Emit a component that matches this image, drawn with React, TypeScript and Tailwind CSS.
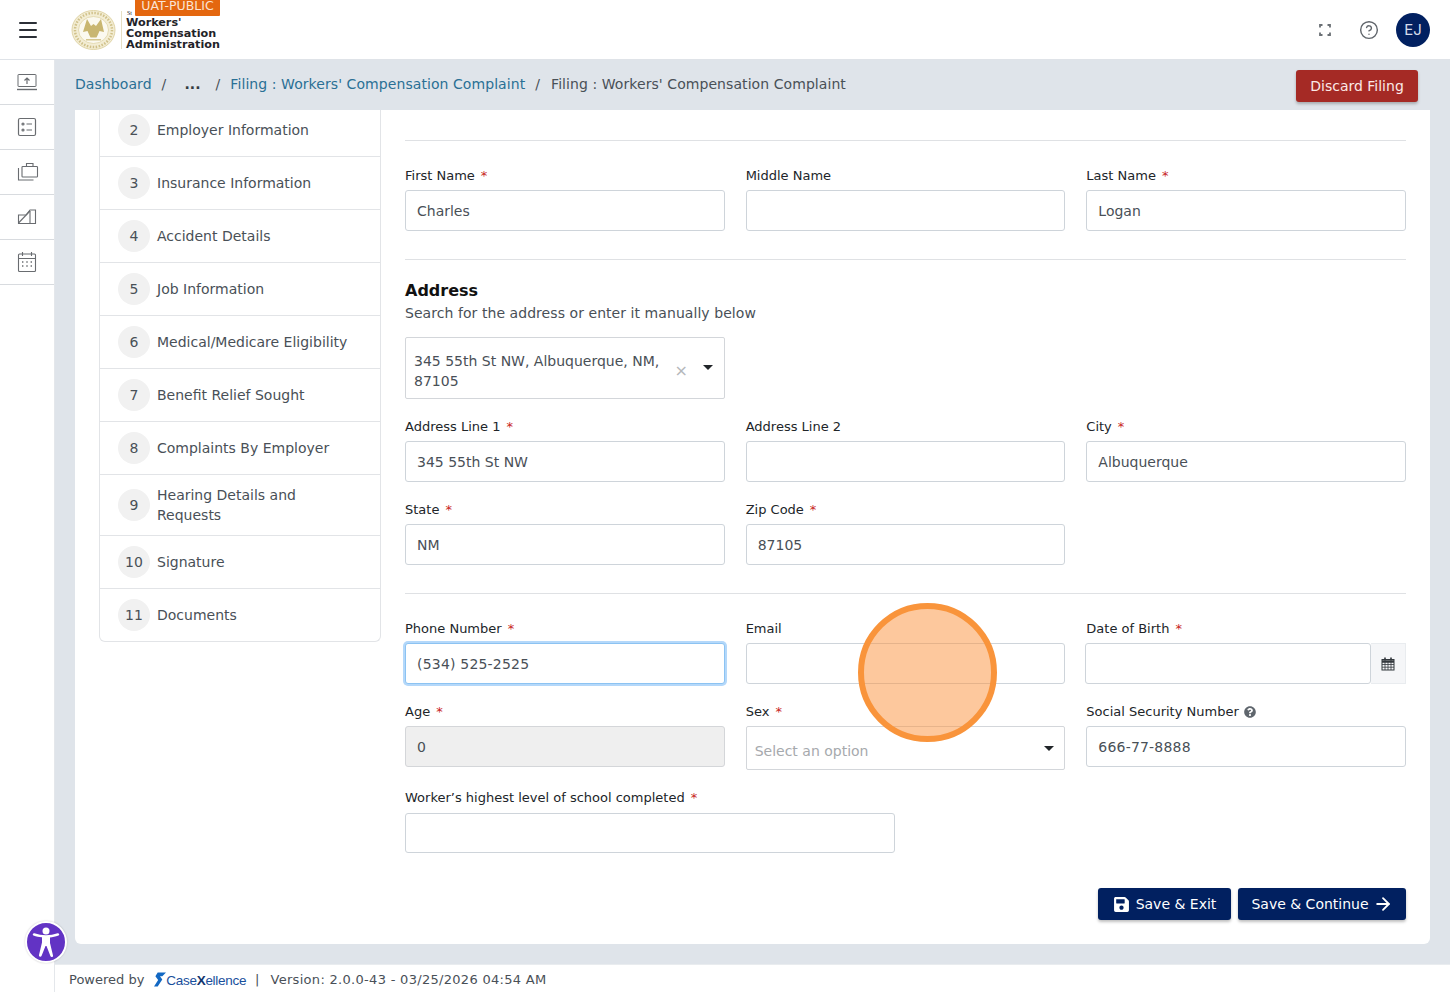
import React from "react";
import { FaSave, FaQuestionCircle } from "react-icons/fa";
import { ArrowRight, CircleHelp, Menu } from "lucide-react";

const steps: [string, string][] = [
  ["2", "Employer Information"],
  ["3", "Insurance Information"],
  ["4", "Accident Details"],
  ["5", "Job Information"],
  ["6", "Medical/Medicare Eligibility"],
  ["7", "Benefit Relief Sought"],
  ["8", "Complaints By Employer"],
  ["9", "Hearing Details and Requests"],
  ["10", "Signature"],
  ["11", "Documents"],
];

function Label({ text, req }: { text: string; req?: boolean }) {
  return (
    <div className="h-[20px] mb-[4px] leading-[20px] text-[13px] text-[#212529] whitespace-nowrap">
      {text}
      {req && <span className="text-[#c81e1e] ml-[6px]">*</span>}
    </div>
  );
}

function Input({ value, extra }: { value?: string; extra?: string }) {
  return (
    <div className={`h-[41px] rounded-[3px] border px-[11px] pt-[1px] flex items-center text-[14px] text-[#495057] ${extra ?? "bg-white border-[#ced4da]"}`}>
      {value}
    </div>
  );
}

function Field({ label, req, value, extra }: { label: string; req?: boolean; value?: string; extra?: string }) {
  return (
    <div>
      <Label text={label} req={req} />
      <Input value={value} extra={extra} />
    </div>
  );
}

function Caret() {
  return (
    <svg width="10" height="5" viewBox="0 0 10 5" className="shrink-0">
      <path d="M0 0h10L5 5z" fill="#212529" />
    </svg>
  );
}

function Divider() {
  return <div className="h-px bg-[#dfe1e4]" />;
}

const sideIcons = [
  <svg key="a" width="22" height="18" viewBox="0 0 22 18" fill="none" stroke="#696c70" strokeWidth="1">
    <rect x="2" y="1.500" width="18" height="12" rx="0.500" />
    <path d="M11 11V5M8.500 7.500 11 5l2.500 2.500" strokeWidth="1.200" />
    <path d="M1 16.500h20" strokeWidth="1.400" />
  </svg>,
  <svg key="b" width="20" height="20" viewBox="0 0 20 20" fill="none" stroke="#696c70" strokeWidth="1.200">
    <rect x="1.500" y="1.500" width="17" height="17" rx="1.500" />
    <circle cx="6" cy="7" r="1" />
    <circle cx="6" cy="13" r="1" />
    <path d="M9.500 7H15M9.500 13H15" />
  </svg>,
  <svg key="c" width="22" height="20" viewBox="0 0 22 20" fill="none" stroke="#696c70" strokeWidth="1.100" className="ml-[2px]">
    <rect x="5" y="4.500" width="15.500" height="10.500" rx="0.800" />
    <path d="M9.500 4.500V1.500h6.500v3" />
    <path d="M1.500 6v12h15" />
  </svg>,
  <svg key="d" width="20" height="16" viewBox="0 0 20 16" fill="none" stroke="#696c70" strokeWidth="1.100">
    <path d="M1.500 6h7.500l4-5h5.500v13.500h-17z" />
    <path d="M1.500 14 13 2" />
    <path d="M13 2v12.500" />
  </svg>,
  <svg key="e" width="20" height="22" viewBox="0 0 20 22" fill="none" stroke="#696c70" strokeWidth="1.100">
    <rect x="1.500" y="3" width="17" height="17.500" rx="1" />
    <path d="M1.500 7.500h17M5.500 1v4M14.500 1v4" />
    <path d="M5 11h1.400M9.300 11h1.400M13.600 11h1.400M5 15h1.400M9.300 15h1.400M13.600 15h1.400" strokeWidth="1.400" />
  </svg>,
];

function Emblem() {
  return (
    <svg width="46" height="40" viewBox="0 0 46 40">
      <ellipse cx="22.500" cy="20" rx="21.500" ry="19.500" fill="#f3edd4" stroke="#e0d4a6" strokeWidth="1" />
      <ellipse cx="22.500" cy="20" rx="15" ry="13.500" fill="#fbf9f0" stroke="#e0d4a6" strokeWidth="0.800" />
      <ellipse cx="22.500" cy="20" rx="18.500" ry="17" fill="none" stroke="#d0c18a" strokeWidth="2.500" strokeDasharray="1.500 1.500" />
      <path d="M12 22 16 9l4 7 2.500-2 2.500 2 5-7 3 13-4.500-1-2 4.500-1 2h-6l-1-2-2-4.500z" fill="#c9b671" />
      <path d="M15 29h15v1.500H15z" fill="#d5c68f" />
    </svg>
  );
}

export default function App() {
  return (
    <div className="relative h-[992px] w-[1450px] overflow-hidden flex flex-col bg-white font-['DejaVu_Sans',sans-serif] text-[14px] text-[#495057]">
      {/* header */}
      <header className="h-[60px] shrink-0 bg-white border-b border-[#dfe3e8] flex items-center">
        <div className="w-[55px] flex justify-center">
          <Menu size={24} strokeWidth={2} className="text-[#2b2f36]" />
        </div>
        <div className="relative flex items-center ml-[16px] h-full">
          <Emblem />
          <div className="w-px h-[38px] bg-[#e6dfc4] ml-[4px]" />
          <div className="ml-[4px] mt-[7px] font-bold text-[11.200px] leading-[11px] text-[#1f2328]">
            <div className="absolute left-[56px] top-[10px] font-['Liberation_Serif',serif] font-normal text-[6px] leading-[6px]">St</div>
            <div>Workers'</div>
            <div>Compensation</div>
            <div>Administration</div>
          </div>
          <div className="absolute left-[64px] top-0 h-[16px] w-[85px] bg-[#e4670f] text-[#fbe3d2] text-[12.500px] leading-[12px] pb-[4px] flex items-center justify-center rounded-b-[1px]">
            UAT-PUBLIC
          </div>
        </div>
        <div className="ml-auto flex items-center mr-[20px]">
          <svg width="12" height="12" viewBox="0 0 12 12" fill="none" stroke="#6b7075" strokeWidth="1.800" className="mr-[28px]">
            <path d="M1 3.500V1h2.500M8.500 1H11v2.500M11 8.500V11H8.500M3.500 11H1V8.500" />
          </svg>
          <CircleHelp size={20} strokeWidth={1.700} className="text-[#60656b] mr-[17px]" />
          <div className="h-[34px] w-[34px] rounded-full bg-[#012060] text-[#d5dcea] text-[15px] pt-[2px] font-['Inter',sans-serif] flex items-center justify-center">EJ</div>
        </div>
      </header>

      <div className="flex-1 flex min-h-0">
        {/* sidebar */}
        <aside className="w-[55px] shrink-0 bg-white border-r border-[#e4e7eb] flex flex-col">
          {sideIcons.map((ic, i) => (
            <div key={i} className="h-[45px] border-b border-[#d8dbdf] flex items-center justify-center">
              {ic}
            </div>
          ))}
        </aside>

        <div className="flex-1 min-w-0 flex flex-col bg-[#dfe4ea]">
          {/* breadcrumb */}
          <div className="h-[50px] shrink-0 flex items-center pl-[20px] pr-[32px] pb-[2px] text-[14px] tracking-[0.07px]">
            <span className="text-[#2a7095]">Dashboard</span>
            <span className="ml-[10px] text-[#495057]">/</span>
            <span className="ml-[18px] font-bold text-[#343a40]">...</span>
            <span className="ml-[15px] text-[#495057]">/</span>
            <span className="ml-[10px] text-[#2a7095]">Filing : Workers' Compensation Complaint</span>
            <span className="ml-[10px] text-[#495057]">/</span>
            <span className="ml-[11px] text-[#495057]">Filing : Workers' Compensation Complaint</span>
            <button className="ml-auto mt-[4px] h-[32px] w-[122px] rounded-[3px] bg-[#a52a25] text-[#fbe9e7] text-[14px] tracking-normal shadow-[0_2px_3px_rgba(0,0,0,0.25)]">
              Discard Filing
            </button>
          </div>

          {/* card */}
          <main className="flex-1 min-h-0 mx-[20px] mb-[20px] bg-white rounded-b-[6px] overflow-hidden flex pl-[24px] pr-[24px]">
            <div className="w-[282px] shrink-0">
              <div className="border-x border-b border-[#e2e4e7] rounded-b-[6px] -mt-[6px]">
                {steps.map(([n, t]) => (
                  <div key={n} className={`flex items-center pl-[18px] pr-[20px] border-b last:border-b-0 border-[#e2e4e7] ${n === "9" ? "h-[61px]" : n === "11" ? "h-[52px]" : "h-[53px]"}`}>
                    <div className="h-[32px] w-[32px] shrink-0 rounded-full bg-[#f1f1f1] flex items-center justify-center text-[14px]">{n}</div>
                    <div className="ml-[7px] leading-[20px] text-[14px]">{t}</div>
                  </div>
                ))}
              </div>
            </div>

            <div className="flex-1 min-w-0 ml-[24px] pt-[30px]">
              <Divider />
              <div className="grid grid-cols-3 gap-x-[21px] mt-[25px]">
                <Field label="First Name" req value="Charles" />
                <Field label="Middle Name" />
                <Field label="Last Name" req value="Logan" />
              </div>
              <div className="mt-[28px]"><Divider /></div>
              <div className="mt-[21px] font-bold text-[16px] leading-[20px] text-[#111]">Address</div>
              <div className="mt-[2px] text-[14px] leading-[20px] tracking-[0.06px]">Search for the address or enter it manually below</div>
              <div className="mt-[14px] w-[320px] h-[62px] rounded-[2px] border border-[#d3d6da] flex items-center pl-[8px] pr-[11px]">
                <div className="flex-1 pt-[6px] leading-[20px] text-[14px]">345 55th St NW, Albuquerque, NM, 87105</div>
                <span className="text-[#b5b8bb] text-[16px] leading-[16px] ml-[10px] mt-[6px]">×</span>
                <span className="ml-[15px] mb-[2px]"><Caret /></span>
              </div>
              <div className="grid grid-cols-3 gap-x-[21px] gap-y-[18px] mt-[18px]">
                <Field label="Address Line 1" req value="345 55th St NW" />
                <Field label="Address Line 2" />
                <Field label="City" req value="Albuquerque" />
                <Field label="State" req value="NM" />
                <Field label="Zip Code" req value="87105" />
              </div>
              <div className="mt-[28px]"><Divider /></div>
              <div className="grid grid-cols-3 gap-x-[21px] gap-y-[18px] mt-[25px] items-start">
                <div>
                  <Label text="Phone Number" req />
                  <div className="h-[41px] rounded-[3px] border border-[#8cc3f2] shadow-[0_0_0_2px_#b4d8fa] bg-white px-[11px] pt-[1px] flex items-center text-[14px] tracking-[0.2px]">
                    (534) 525-2525
                  </div>
                </div>
                <Field label="Email" />
                <div>
                  <Label text="Date of Birth" req />
                  <div className="flex">
                    <div className="flex-1 -ml-[1px] h-[41px] rounded-[3px] border border-[#ced4da]" />
                    <div className="w-[35px] h-[41px] bg-[#f5f6f8] border-y border-r border-[#e9ecef] flex items-center justify-center">
                      <svg width="14" height="14" viewBox="0 0 14 14" fill="none" stroke="#33383d" strokeWidth="1">
                        <rect x="1" y="2.500" width="12" height="10.500" />
                        <path d="M1 4.500h12" strokeWidth="2.500" />
                        <path d="M1 7.500h12M1 10.200h12M4 5v8M7 5v8M10 5v8" strokeWidth="0.800" />
                        <path d="M4 .5v3M10 .5v3" strokeWidth="1.600" />
                      </svg>
                    </div>
                  </div>
                </div>
                <Field label="Age" req value="0" extra="bg-[#efefef] border-[#d4d6d9]" />
                <div>
                  <Label text="Sex" req />
                  <div className="h-[44px] rounded-[2px] border border-[#d3d6da] flex items-center pl-[8px] pr-[10px]">
                    <span className="flex-1 text-[14px] text-[#a6a9ad] mt-[6px]">Select an option</span>
                    <Caret />
                  </div>
                </div>
                <div>
                  <div className="h-[20px] mb-[4px] leading-[20px] text-[13px] text-[#212529] flex items-center">
                    Social Security Number
                    <FaQuestionCircle size={12} className="ml-[5px] text-[#5f666d]" />
                  </div>
                  <div className="h-[41px] rounded-[3px] border border-[#ced4da] bg-white px-[11px] pt-[1px] flex items-center text-[14px] tracking-[0.2px]">
                    666-77-8888
                  </div>
                </div>
              </div>
              <div className="mt-[18px] w-[490px]">
                <Label text="Worker’s highest level of school completed" req />
                <div className="h-[40px] mt-[5px] rounded-[3px] border border-[#ced4da]" />
              </div>
              <div className="flex justify-end gap-[7px] mt-[35px]">
                <button className="h-[32px] w-[133px] rounded-[3px] bg-[#012060] text-white text-[14px] flex items-center justify-center gap-[6px] shadow-[0_2px_3px_rgba(0,0,0,0.25)]">
                  <FaSave size={17} />
                  Save &amp; Exit
                </button>
                <button className="h-[32px] w-[168px] rounded-[3px] bg-[#012060] text-white text-[14px] flex items-center justify-center gap-[4px] shadow-[0_2px_3px_rgba(0,0,0,0.25)]">
                  Save &amp; Continue
                  <ArrowRight size={20} strokeWidth={2.200} />
                </button>
              </div>
            </div>
          </main>

          {/* footer */}
          <footer className="h-[28px] shrink-0 bg-white border-t border-[#e9ecef] flex items-center pl-[14px] pt-[2px] text-[13px] text-[#495057] whitespace-nowrap">
            <span>Powered by</span>
            <svg width="12" height="15" viewBox="0 0 13 15" className="ml-[10px]">
              <path d="M4 0h9L9 4H6.500L9 7.500 4 15H0l4.500-7L1.500 4z" fill="#1268c3" />
            </svg>
            <span className="font-['Liberation_Sans',sans-serif] text-[13.500px] text-[#1a4f9c] tracking-[-0.3px] mt-[3px]">Case<b className="font-bold text-[#12356e]">X</b>ellence</span>
            <span className="ml-[9px]">|</span>
            <span className="ml-[11px] tracking-[0.3px]">Version: 2.0.0-43 - 03/25/2026 04:54 AM</span>
          </footer>
        </div>
      </div>

      {/* floating accessibility button */}
      <div className="absolute left-[25px] top-[921px] h-[42px] w-[42px] rounded-full bg-[#6233c4] border-2 border-white shadow-[0_0_2px_rgba(0,0,0,0.2)] flex items-center justify-center">
        <svg width="30" height="32" viewBox="0 0 30 32" fill="white">
          <circle cx="15" cy="5" r="3.500" />
          <path d="M2.500 9.500c-.6-.2-.9-1-.6-1.600.3-.5.900-.8 1.500-.6C7 8.500 11 9.200 15 9.200s8-.7 11.600-1.900c.6-.2 1.200.1 1.500.6.3.6 0 1.400-.6 1.600-3 1.100-6 1.800-8.500 2.100v5.400l3 12.400c.2.800-.3 1.500-1 1.700-.7.100-1.400-.3-1.600-1L15.500 20h-1L10.600 29.700c-.2.700-.9 1.100-1.600 1-.7-.2-1.200-.9-1-1.700l3-12.400v-5.400C8.500 11.300 5.500 10.600 2.500 9.500z" />
        </svg>
      </div>

      {/* click highlight */}
      <div className="absolute left-[858px] top-[603px] h-[139px] w-[139px] rounded-full border-[6px] border-[#f9943b] bg-[rgba(251,146,60,0.5)]" />
    </div>
  );
}
